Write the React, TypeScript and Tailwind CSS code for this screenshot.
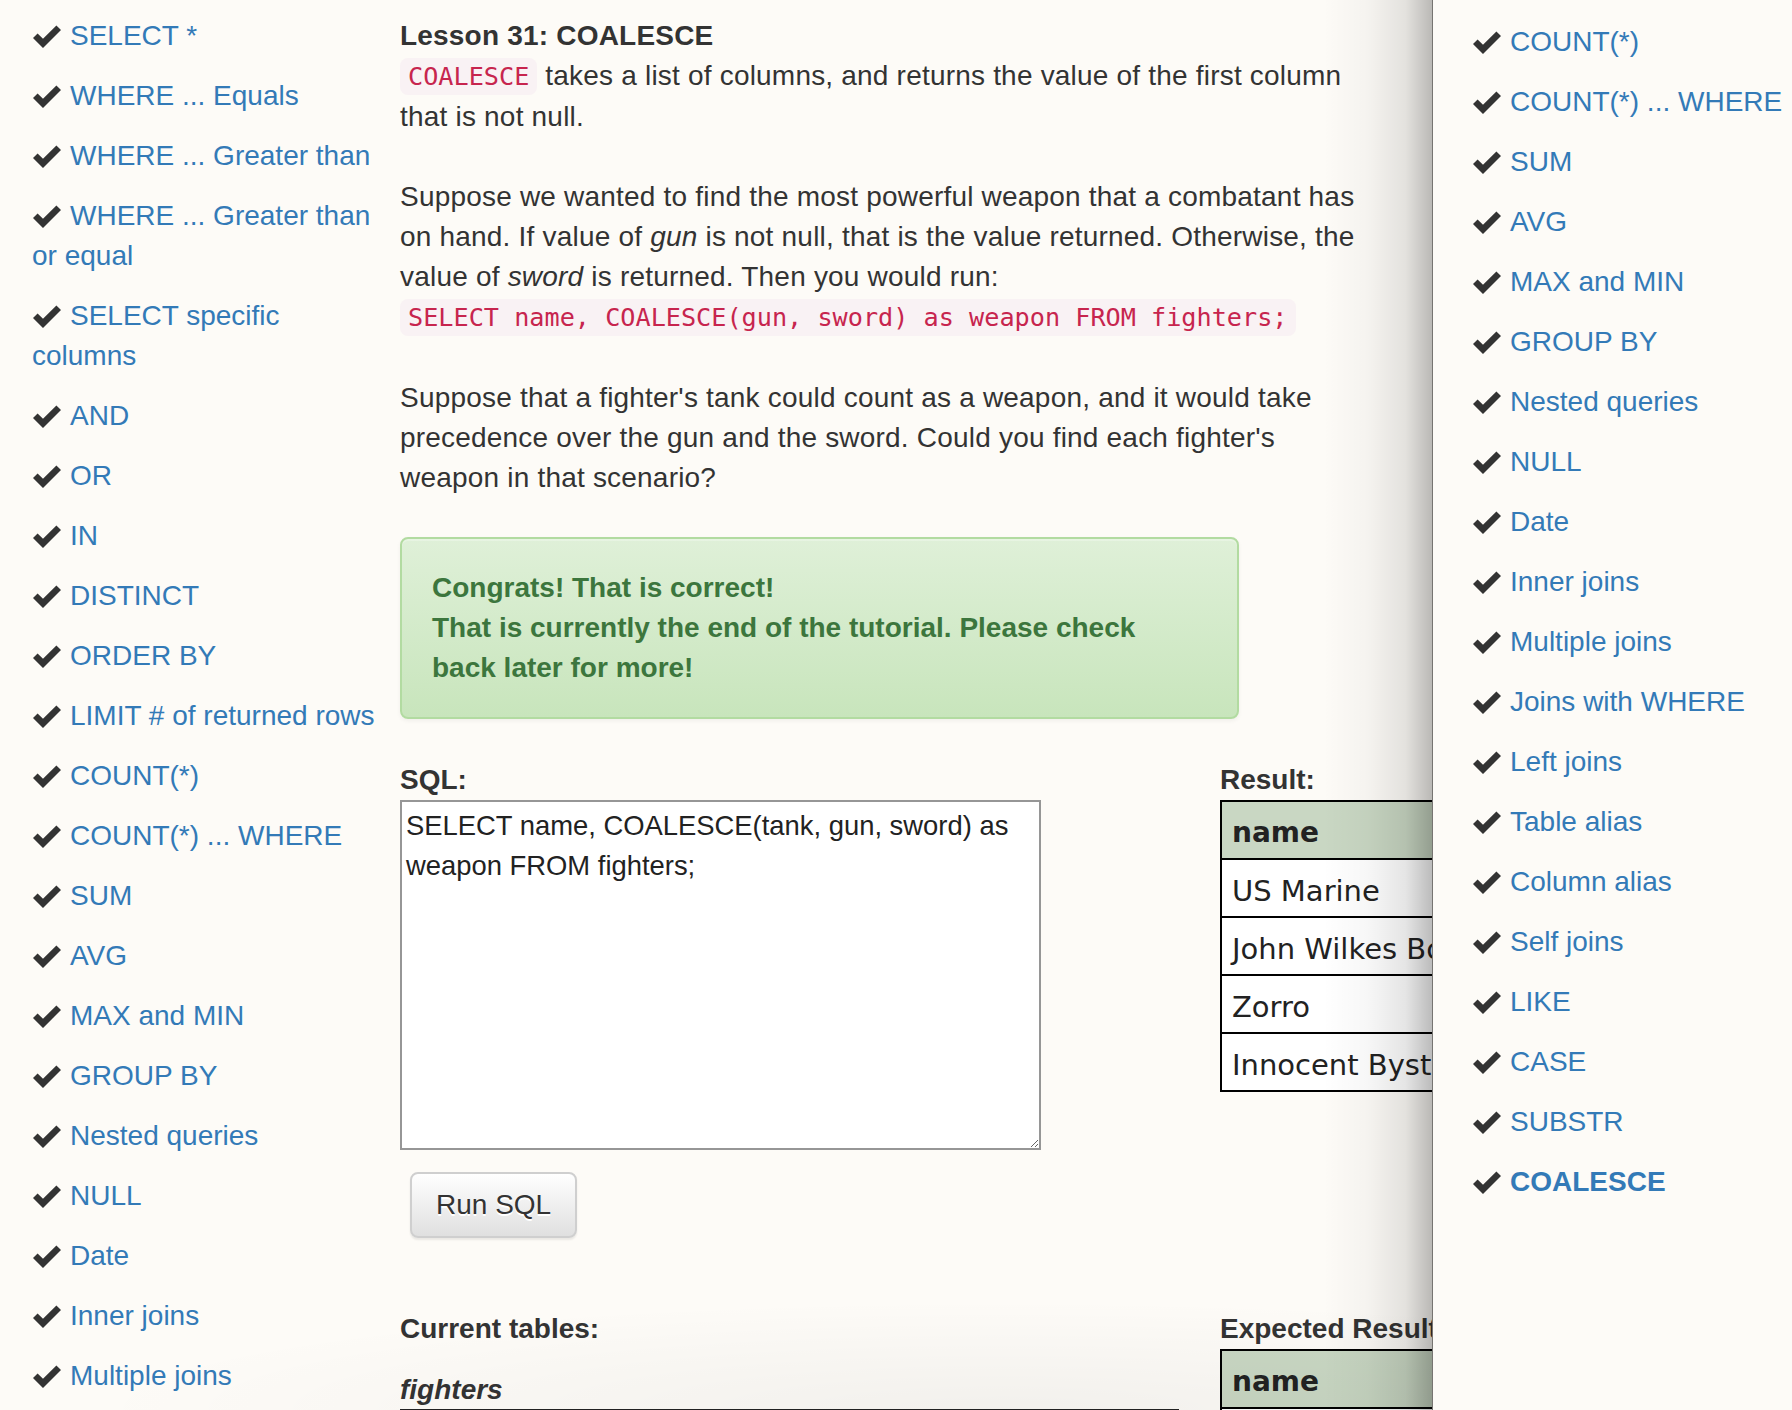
import React from 'react';

// Lessons shown in the left sidebar (page scrolled to the top)
const leftLessons = [
  'SELECT *',
  'WHERE ... Equals',
  'WHERE ... Greater than',
  'WHERE ... Greater than or equal',
  'SELECT specific columns',
  'AND',
  'OR',
  'IN',
  'DISTINCT',
  'ORDER BY',
  'LIMIT # of returned rows',
  'COUNT(*)',
  'COUNT(*) ... WHERE',
  'SUM',
  'AVG',
  'MAX and MIN',
  'GROUP BY',
  'Nested queries',
  'NULL',
  'Date',
  'Inner joins',
  'Multiple joins',
  'Joins with WHERE',
];

// Lessons in the slide-in panel (scrolled down to the end)
const rightLessons = [
  'COUNT(*)',
  'COUNT(*) ... WHERE',
  'SUM',
  'AVG',
  'MAX and MIN',
  'GROUP BY',
  'Nested queries',
  'NULL',
  'Date',
  'Inner joins',
  'Multiple joins',
  'Joins with WHERE',
  'Left joins',
  'Table alias',
  'Column alias',
  'Self joins',
  'LIKE',
  'CASE',
  'SUBSTR',
  'COALESCE',
];

const resultRows = ['US Marine', 'John Wilkes Booth', 'Zorro', 'Innocent Bystander'];

const Check = () => (
  <svg
    className="inline-block w-[28px] h-[23px] ml-[1px] mr-[9px] align-[-3px]"
    viewBox="0 0 28 23"
  >
    <polygon points="0,13 4.6,8.4 10,13.8 23.4,0.4 28,5 10,23" fill="#333" />
  </svg>
);

const LessonItem = ({ label, active }: { label: string; active?: boolean }) => (
  <li className="mb-[20px]">
    <Check />
    <a className={active ? 'text-[#337ab7] font-bold' : 'text-[#337ab7]'}>{label}</a>
  </li>
);

const Code = ({ children }: { children: React.ReactNode }) => (
  <code className="font-['DejaVu_Sans_Mono',Menlo,monospace] text-[25.2px] tracking-normal text-[#c7254e] bg-[#f9f2f4] rounded-[8px] px-[8px] py-[4px]">
    {children}
  </code>
);

const NameTable = ({ rows }: { rows: string[] }) => (
  <table className="border-collapse border-2 border-black font-['DejaVu_Sans',Verdana,sans-serif] leading-[40px] w-[420px]">
    <thead>
      <tr className="bg-[#c9d7c3]">
        <th className="border-2 border-black px-[10px] pt-[11px] pb-[5px] text-left text-[28px] font-bold text-[#222]">name</th>
        <th className="border-2 border-black px-[10px] pt-[11px] pb-[5px] text-left text-[28px] font-bold text-[#222]">weapon</th>
      </tr>
    </thead>
    <tbody>
      {rows.map((r) => (
        <tr key={r} className="bg-white">
          <td className="border-2 border-black px-[10px] pt-[11px] pb-[5px] whitespace-nowrap text-[29px] text-[#222]">{r}</td>
          <td className="border-2 border-black px-[10px] pt-[11px] pb-[5px] whitespace-nowrap text-[29px] text-[#222]">tank</td>
        </tr>
      ))}
    </tbody>
  </table>
);

export default function App() {
  return (
    <div className="relative h-[1410px] w-[1792px] overflow-hidden bg-[#fdfbf7] font-['Liberation_Sans',Arial,sans-serif] text-[28px] leading-[40px] text-[#333]">
      <div className="flex pt-[16px]">
        {/* left lesson list */}
        <aside className="w-[384px] shrink-0 pl-[32px]">
          <ul>
            {leftLessons.map((l) => (
              <LessonItem key={l} label={l} />
            ))}
          </ul>
        </aside>

        {/* lesson body */}
        <main className="ml-[16px] w-[970px] shrink-0">
          <div className="tracking-[0.2px]">
            <b>Lesson 31: COALESCE</b>
            <br />
            <Code>COALESCE</Code> takes a list of columns, and returns the value of the first column that is not null.
            <br />
            <br />
            Suppose we wanted to find the most powerful weapon that a combatant has on hand. If value of <i>gun</i> is
            not null, that is the value returned. Otherwise, the value of <i>sword</i> is returned. Then you would run:
            <br />
            <Code>SELECT name, COALESCE(gun, sword) as weapon FROM fighters;</Code>
            <br />
            <br />
            Suppose that a fighter's tank could count as a weapon, and it would take precedence over the gun and the
            sword. Could you find each fighter's weapon in that scenario?
          </div>

          <div className="mt-[39px] w-[839px] rounded-[8px] border-2 border-[#b2dba1] bg-[linear-gradient(to_bottom,#dff0d8,#c8e5bc)] pt-[29px] pb-[29px] px-[30px] font-bold text-[#3c763d] shadow-[inset_0_2px_0_rgba(255,255,255,0.25),0_2px_4px_rgba(0,0,0,0.05)]">
            <div className="max-w-[760px]">
              Congrats! That is correct!
              <br />
              That is currently the end of the tutorial. Please check back later for more!
            </div>
          </div>

          <div className="mt-[41px] flex">
            <div className="w-[820px] shrink-0">
              <div className="font-bold">SQL:</div>
              <textarea
                readOnly
                defaultValue="SELECT name, COALESCE(tank, gun, sword) as weapon FROM fighters;"
                className="block w-[641px] h-[350px] bg-white border-2 border-[#969696] pt-[4px] px-[4px] font-['Liberation_Sans',Arial,sans-serif] text-[27.4px] leading-[40px] text-[#222] outline-none"
              />
              <button className="mt-[22px] ml-[10px] h-[66px] rounded-[8px] border-2 border-[#cfcfcf] bg-[linear-gradient(to_bottom,#ffffff,#e0e0e0)] px-[24px] text-[28px] leading-[40px] text-[#333] shadow-[0_2px_2px_rgba(0,0,0,0.08)] [text-shadow:0_2px_0_#fff]">
                Run SQL
              </button>
            </div>
            <div className="shrink-0">
              <div className="font-bold">Result:</div>
              <NameTable rows={resultRows} />
            </div>
          </div>

          <div className="mt-[71px] flex">
            <div className="w-[820px] shrink-0">
              <div className="font-bold">Current tables:</div>
              <div className="mt-[22px] font-bold italic leading-[38px]">fighters</div>
              <div className="w-[779px] border-t-2 border-[#222] h-[40px]" />
            </div>
            <div className="shrink-0">
              <div className="font-bold whitespace-nowrap">Expected Result:</div>
              <NameTable rows={resultRows} />
            </div>
          </div>
        </main>
      </div>

      {/* faint shade along the bottom edge of the page */}
      <div className="pointer-events-none absolute bottom-0 left-0 h-[120px] w-[1432px] bg-[radial-gradient(ellipse_at_70%_100%,rgba(0,0,0,0.045),rgba(0,0,0,0)_65%)]" />

      {/* slide-in lesson panel */}
      <div className="absolute top-0 right-0 h-full w-[360px] border-l border-[#a19e9a] bg-[#fdfbf7] pt-[22px] pl-[39px]">
        <div className="absolute top-0 right-full h-full w-[110px] bg-[linear-gradient(to_right,rgba(0,0,0,0)_0%,rgba(0,0,0,0.03)_40%,rgba(0,0,0,0.1)_75%,rgba(0,0,0,0.27)_100%)]" />
        <ul>
          {rightLessons.map((l) => (
            <LessonItem key={l} label={l} active={l === 'COALESCE'} />
          ))}
        </ul>
      </div>
    </div>
  );
}
